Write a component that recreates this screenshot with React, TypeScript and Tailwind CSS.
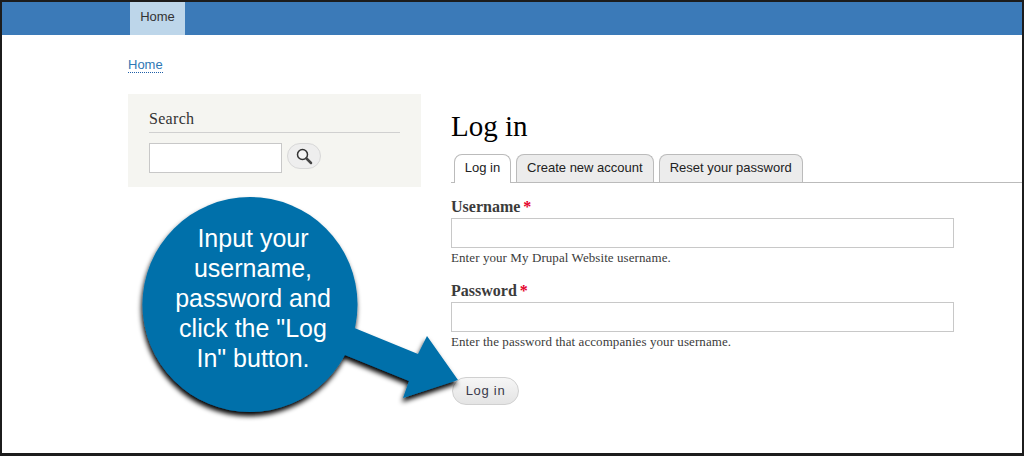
const serif = "font-['Liberation_Serif',serif]";

function SearchIcon() {
  return (
    <svg width="18" height="18" viewBox="0 0 18 18" fill="none">
      <circle cx="7.5" cy="7.5" r="5" stroke="#333" strokeWidth="1.5" fill="#f4f4f4" />
      <path d="M11.5 11.5L16 16" stroke="#444" strokeWidth="2.5" strokeLinecap="round" />
    </svg>
  );
}

function Field({ label, help }: { label: string; help: string }) {
  return (
    <div>
      <div className="h-[18px] text-[16px] leading-[19px] font-bold text-[#3b3b3b]">
        {label} <span className="-ml-[1px] text-[#e4002b]">*</span>
      </div>
      <div className="mt-[3px] h-[30px] w-[503px] border border-[#c8c8c8] bg-white" />
      <p className="text-[13px] leading-[19px] tracking-[0.08px] text-[#3b3b3b]">{help}</p>
    </div>
  );
}

function Tab({ label, active }: { label: string; active?: boolean }) {
  return (
    <div
      className={
        active
          ? 'relative -mb-px flex h-[29px] w-[57px] items-center justify-center rounded-t-lg border border-b-0 border-[#bbb] bg-white pb-[2px] text-[13px] text-[#222]'
          : 'flex h-[28px] items-center justify-center rounded-t-lg border border-b-0 border-[#bbb] bg-[#ececec] px-[10px] pb-[2px] text-[13px] text-[#222]'
      }
    >
      {label}
    </div>
  );
}

function Callout() {
  return (
    <div className="absolute left-[130px] top-[190px] h-[240px] w-[340px]">
      <svg width="340" height="240" viewBox="130 190 340 240" className="absolute inset-0">
        <defs>
          <filter id="drop" x="-10%" y="-10%" width="120%" height="120%">
            <feDropShadow dx="-1" dy="4" stdDeviation="2.5" floodColor="#000" floodOpacity="1" />
          </filter>
        </defs>
        <g filter="url(#drop)" fill="#0270aa">
          <circle cx="250" cy="304.5" r="107.5" />
          <polygon points="352,327 418,354 427,336 458,380 403,398 409,381 340,353" />
        </g>
      </svg>
      <div className="absolute left-[33px] top-[33px] w-[180px] text-center font-['Liberation_Sans',sans-serif] text-[25px] leading-[30px] text-white">
        Input your username, password and click the "Log In" button.
      </div>
    </div>
  );
}

export default function App() {
  return (
    <div className="relative h-[456px] w-[1024px] overflow-hidden border-2 border-b-[3px] border-[#1c1c1c] bg-white font-['Liberation_Sans',sans-serif]">
      <div className="flex h-[33px] bg-[#3b7ab8] pl-[128px]">
        <div className="flex h-full w-[55px] items-center justify-center bg-[#bdd6ea] pb-[3px] text-[13px] text-[#333]">
          Home
        </div>
      </div>

      <div className="pl-[126px] pt-[17px]">
        <a className="border-b border-dotted border-[#1f5fa8] text-[13px] leading-[16px] text-[#2f78b5]">Home</a>
      </div>

      <div className="mt-[18px] flex pl-[126px]">
        <aside className={`${serif} h-[93px] w-[293px] bg-[#f5f5f1] px-[21px] pt-[15px]`}>
          <div className="border-b border-[#d0d0d0] pb-[4px] text-[16px] leading-[19px] tracking-[0.3px] text-[#333]">
            Search
          </div>
          <div className="mt-[10px] flex items-start gap-[5px]">
            <div className="h-[30px] w-[133px] border border-[#c8c8c8] bg-white" />
            <div className="flex h-[26px] w-[34px] items-center justify-center rounded-full border border-[#d8d8d8] bg-[#eeeeee]">
              <SearchIcon />
            </div>
          </div>
        </aside>

        <main className={`${serif} ml-[30px] flex-1`}>
          <h1 className="mt-[15px] text-[29px] leading-[34px] text-black">Log in</h1>
          <div className="mt-[11px] flex items-end gap-[5px] border-b border-[#bbb] pl-[3px] font-['Liberation_Sans',sans-serif]">
            <Tab label="Log in" active />
            <Tab label="Create new account" />
            <Tab label="Reset your password" />
          </div>
          <div className="mt-[14px] flex flex-col gap-[14px]">
            <Field label="Username" help="Enter your My Drupal Website username." />
            <Field label="Password" help="Enter the password that accompanies your username." />
          </div>
          <button className="ml-px mt-[26px] flex h-[28px] w-[67px] items-center justify-center rounded-full border border-[#d0d0d0] bg-gradient-to-b from-[#f6f6f6] to-[#e4e4e4] font-['Liberation_Sans',sans-serif] text-[13px] tracking-[0.7px] text-[#3a3a4a]">
            Log in
          </button>
        </main>
      </div>

      <div className="absolute -left-[2px] -top-[2px]">
        <Callout />
      </div>
    </div>
  );
}
